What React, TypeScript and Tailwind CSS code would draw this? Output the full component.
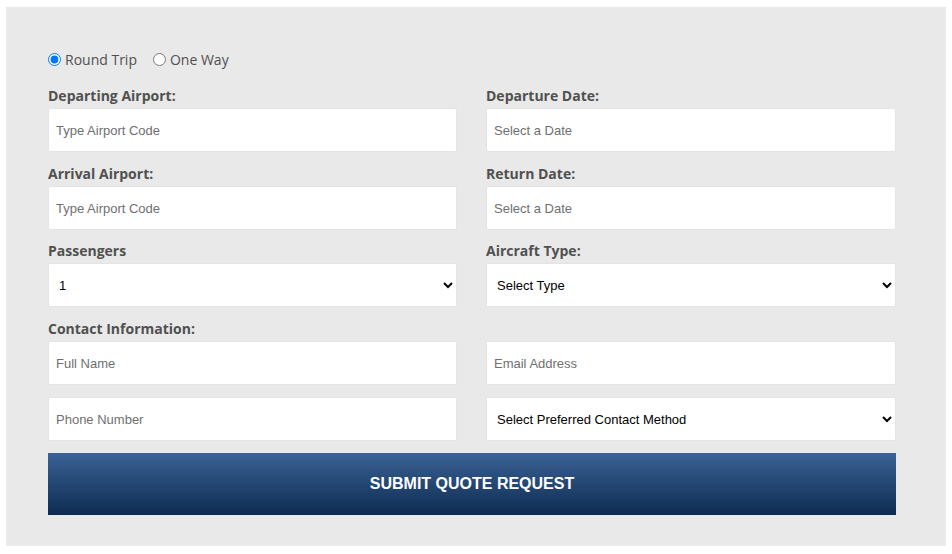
import React from "react";

const labelCls =
  "block h-5 mb-[2px] text-[14px] leading-5 font-bold text-[#505050] font-['Open_Sans',sans-serif]";
const inputCls =
  "block w-full h-[44px] bg-white border border-[#e4e4e4] rounded-[2px] pl-[7px] pr-2 text-[13px] text-black placeholder:text-[#6f6f6f] font-['Liberation_Sans',Arial,sans-serif] outline-none";
const selectCls =
  "block w-full h-[44px] bg-white border border-[#e4e4e4] rounded-[2px] pl-[6px] pr-1 text-[13px] text-black font-['Liberation_Sans',Arial,sans-serif] outline-none";

export default function App() {
  return (
    <div className="w-[952px] h-[554px] bg-white pt-[7px] pl-[6px]">
      <div className="w-[940px] h-[539px] bg-[#e9e9e9] pl-[42px] pr-[50px] pt-[45px]">
        <div className="flex items-center h-[14px] mb-[20px] text-[14px] text-[#505050] font-['Open_Sans',sans-serif]">
          <label className="flex items-center mr-[16px]">
            <input type="radio" name="trip" defaultChecked className="m-0 mr-[4px] w-[13px] h-[13px]" />
            Round Trip
          </label>
          <label className="flex items-center">
            <input type="radio" name="trip" className="m-0 mr-[4px] w-[13px] h-[13px]" />
            One Way
          </label>
        </div>
        <div className="grid grid-cols-[409px_410px] gap-x-[29px]">
          <div>
            <label className={labelCls}>Departing Airport:</label>
            <input className={inputCls} placeholder="Type Airport Code" />
          </div>
          <div>
            <label className={labelCls}>Departure Date:</label>
            <input className={inputCls} placeholder="Select a Date" />
          </div>
          <div className="mt-[12px]">
            <label className={labelCls}>Arrival Airport:</label>
            <input className={inputCls} placeholder="Type Airport Code" />
          </div>
          <div className="mt-[12px]">
            <label className={labelCls}>Return Date:</label>
            <input className={inputCls} placeholder="Select a Date" />
          </div>
          <div className="mt-[11px]">
            <label className={labelCls}>Passengers</label>
            <select className={selectCls} defaultValue="1">
              <option value="1">1</option>
              <option value="2">2</option>
            </select>
          </div>
          <div className="mt-[11px]">
            <label className={labelCls}>Aircraft Type:</label>
            <select className={selectCls} defaultValue="">
              <option value="">Select Type</option>
            </select>
          </div>
          <div className="mt-[12px]">
            <label className={labelCls}>Contact Information:</label>
            <input className={inputCls} placeholder="Full Name" />
          </div>
          <div className="mt-[12px] pt-[22px]">
            <input className={inputCls} placeholder="Email Address" />
          </div>
          <div className="mt-[12px]">
            <input className={inputCls} placeholder="Phone Number" />
          </div>
          <div className="mt-[12px]">
            <select className={selectCls} defaultValue="">
              <option value="">Select Preferred Contact Method</option>
            </select>
          </div>
        </div>
        <button className="mt-[12px] w-full h-[62px] bg-gradient-to-b from-[#3b6396] to-[#0d2c51] text-white font-bold text-[16px] font-['Liberation_Sans',Arial,sans-serif] uppercase">
          Submit Quote Request
        </button>
      </div>
    </div>
  );
}
